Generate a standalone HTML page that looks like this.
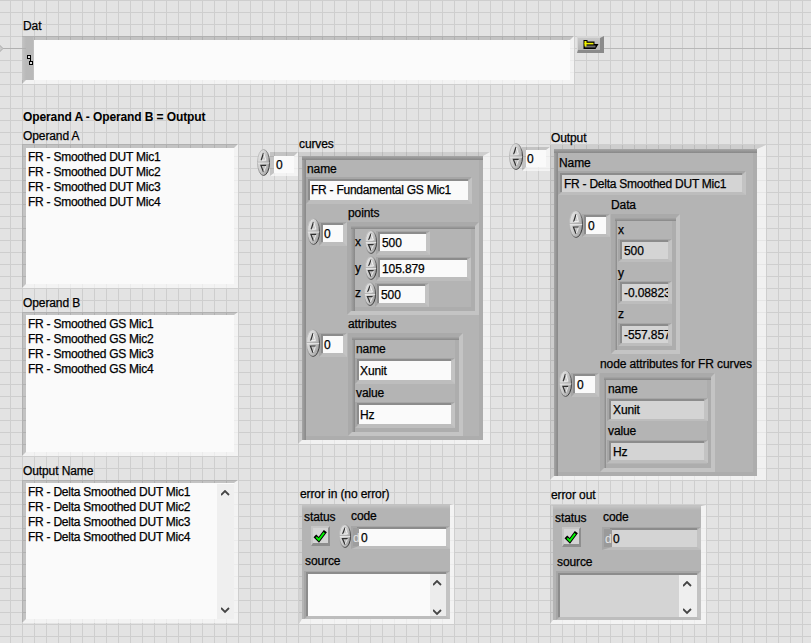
<!DOCTYPE html><html><head><meta charset="utf-8"><style>
*{margin:0;padding:0;box-sizing:content-box}
html,body{width:811px;height:643px;overflow:hidden}
body{position:relative;background-color:#e3e3e3;
background-image:linear-gradient(to right,#cecece 1px,transparent 1px),linear-gradient(to bottom,#cecece 1px,transparent 1px);
background-size:12px 12px;background-position:10px 0px;font-family:"Liberation Sans",sans-serif}
div{position:absolute}
svg{display:block}
.t{font-size:12px;line-height:15px;letter-spacing:-0.1px;color:#000;white-space:nowrap;-webkit-text-stroke:0.25px #000}
.b{font-weight:bold;letter-spacing:-0.1px;-webkit-text-stroke:0.05px #000}
.n{letter-spacing:-0.25px}
.rg{border-style:solid;border-color:rgba(0,0,0,.14) rgba(255,255,255,.6) rgba(255,255,255,.6) rgba(0,0,0,.14);background-clip:padding-box}
.rp{box-sizing:border-box;border-style:solid;border-color:#a6a6a6 #c3c3c3 #bdbdbd #a6a6a6}
.clo{border-style:solid;border-color:rgba(0,0,0,.09) rgba(255,255,255,.5) rgba(255,255,255,.5) rgba(0,0,0,.09)}
.cso{border-style:solid;border-color:#a9a9a9 #c3c3c3 #c3c3c3 #a9a9a9}
.cli{box-sizing:border-box;border-style:solid;border-width:4px 4px 4px 4px;border-color:#8e8e8e #ababab #ababab #8e8e8e;background:#b4b4b4;box-shadow:inset 0 0 0 0 transparent}
</style></head><body>
<div class="t" style="left:23px;top:19px;">Dat</div>
<div style="left:0;top:43px"><svg width="5" height="11"><path d="M-1 1.5 L3 5.5 L-1 9.5" fill="#cacaca" stroke="#a9a9a9" stroke-width="1"/></svg></div>
<div class="rg" style="left:22px;top:36px;width:544px;height:40px;border-width:4px 4px 4px 4px;background-color:#fbfbfb"></div>
<div style="left:22px;top:37px;width:12px;height:43px;background:linear-gradient(to right,#c4c4c4,#b9b9b9 4px,#b9b9b9 11px,#c8c8c8)"></div>
<div style="left:27px;top:55px;width:4px;height:4px;background:#000"></div>
<div style="left:28px;top:56px;width:2px;height:2px;background:#dcdcdc"></div>
<div style="left:30px;top:59px;width:1px;height:2px;background:#000"></div>
<div style="left:3px;top:48px;width:23px;height:1px;background:#b0b0b0"></div>
<div style="left:604px;top:48px;width:207px;height:1px;background:#b8b8b8"></div>
<div style="left:29px;top:61px;width:4px;height:4px;background:#000"></div>
<div style="left:30px;top:62px;width:2px;height:2px;background:#dcdcdc"></div>
<div style="left:577px;top:36px;width:22px;height:12px;border-style:solid;border-width:2px 4px 3px 1px;border-color:#d6d6d6 #8a8a8a #8a8a8a #d6d6d6;background:linear-gradient(#c8c8c8,#b4b4b4)"><svg width="27" height="17" style="position:absolute;left:-1px;top:-2px"><path d="M6.5 4 H10.5 V5.5 H17.5 V8 H21.5 L18.5 13 H6.5 Z" fill="#000"/><rect x="8" y="9.5" width="10.5" height="2" fill="#6e6e6e"/><rect x="7.5" y="5" width="2" height="5.5" fill="#f0f000"/><rect x="7.5" y="6.8" width="9" height="1.6" fill="#f0f000"/></svg></div>
<div class="t b" style="left:23px;top:110px;">Operand A - Operand B = Output</div>
<div class="t" style="left:23px;top:129px;">Operand A</div>
<div class="rg" style="left:22px;top:144px;width:208px;height:136px;border-width:4px 4px 4px 4px;background-color:#fafafa"></div>
<div class="t n" style="left:28px;top:150px;">FR - Smoothed DUT Mic1</div>
<div class="t n" style="left:28px;top:165px;">FR - Smoothed DUT Mic2</div>
<div class="t n" style="left:28px;top:180px;">FR - Smoothed DUT Mic3</div>
<div class="t n" style="left:28px;top:195px;">FR - Smoothed DUT Mic4</div>
<div class="t" style="left:23px;top:296px;">Operand B</div>
<div class="rg" style="left:22px;top:312px;width:208px;height:137px;border-width:3px 4px 4px 4px;background-color:#fafafa"></div>
<div class="t n" style="left:28px;top:317px;">FR - Smoothed GS Mic1</div>
<div class="t n" style="left:28px;top:332px;">FR - Smoothed GS Mic2</div>
<div class="t n" style="left:28px;top:347px;">FR - Smoothed GS Mic3</div>
<div class="t n" style="left:28px;top:362px;">FR - Smoothed GS Mic4</div>
<div class="t" style="left:23px;top:464px;">Output Name</div>
<div class="rg" style="left:22px;top:480px;width:208px;height:136px;border-width:3px 4px 4px 4px;background-color:#fafafa"></div>
<div style="left:217px;top:484px;width:17px;height:135px;background:#efefef"></div>
<div style="left:221px;top:490px;"><svg width="9" height="7"><path d="M0 5 L4 1 L8 5" fill="none" stroke="#444" stroke-width="1.8"/></svg></div>
<div style="left:221px;top:607px;"><svg width="9" height="7"><path d="M0 1 L4 5 L8 1" fill="none" stroke="#444" stroke-width="1.8"/></svg></div>
<div class="t n" style="left:28px;top:485px;">FR - Delta Smoothed DUT Mic1</div>
<div class="t n" style="left:28px;top:500px;">FR - Delta Smoothed DUT Mic2</div>
<div class="t n" style="left:28px;top:515px;">FR - Delta Smoothed DUT Mic3</div>
<div class="t n" style="left:28px;top:530px;">FR - Delta Smoothed DUT Mic4</div>
<div class="t" style="left:299px;top:137px;">curves</div>
<div style="left:257px;top:149px;width:13px;height:27px"><svg width="13" height="27" viewBox="0 0 13 27"><defs><linearGradient id="sf" x1="0" y1="0" x2="1" y2="0.6"><stop offset="0" stop-color="#ececec"/><stop offset="0.5" stop-color="#cfcfcf"/><stop offset="1" stop-color="#a6a6a6"/></linearGradient><linearGradient id="ss" x1="0" y1="0" x2="1" y2="0.7"><stop offset="0" stop-color="#d0d0d0"/><stop offset="0.45" stop-color="#a0a0a0"/><stop offset="1" stop-color="#303030"/></linearGradient></defs><ellipse cx="6.5" cy="13.5" rx="6.0" ry="13.0" fill="url(#sf)" stroke="url(#ss)" stroke-width="1"/><line x1="0.8" y1="13.2" x2="12.2" y2="13.2" stroke="#a4a4a4" stroke-width="0.8"/><line x1="0.8" y1="14.1" x2="12.2" y2="14.1" stroke="#e6e6e6" stroke-width="1"/><path d="M4.2 11.2 L6.5 4.0" stroke="#303030" stroke-width="1.2" fill="none"/><path d="M6.8 4.5 L8.9 11.2 L4.7 11.2" stroke="#f6f6f6" stroke-width="0.9" fill="none"/><path d="M9.1 16.4 L3.9 16.4 L6.5 23.0" stroke="#303030" stroke-width="1.2" fill="none"/><path d="M6.8 22.5 L8.9 17.0" stroke="#f2f2f2" stroke-width="0.9" fill="none"/></svg></div>
<div class="rg" style="left:270px;top:152px;width:20px;height:17px;border-width:4px 4px 3px 4px;background-color:#fafafa"></div>
<div class="t" style="left:276px;top:158px;">0</div>
<div style="box-sizing:border-box;left:298px;top:152px;width:192px;height:292px;border-style:solid;border-width:4px 7px 4px 4px;border-color:rgba(0,0,0,.09) rgba(255,255,255,.5) rgba(255,255,255,.5) rgba(0,0,0,.09)"></div>
<div style="left:302px;top:156px;width:181px;height:284px;background:linear-gradient(to bottom,#a6a6a6,#888888) left top/100% 4px no-repeat,linear-gradient(to right,#a6a6a6,#888888) left top/4px 100% no-repeat,linear-gradient(#adadad,#adadad) right top/4px 100% no-repeat,linear-gradient(#adadad,#adadad) left bottom/100% 4px no-repeat,#b4b4b4"></div>
<div class="t" style="left:307px;top:162px;">name</div>
<div class="rp" style="left:306px;top:177px;width:166px;height:27px;border-width:4px 4px 4px 4px;"></div>
<div style="left:308px;top:179px;width:160px;height:21px;border-top:2px solid #8c8c8c;border-left:2px solid #8c8c8c;box-sizing:border-box"></div>
<div style="left:310px;top:181px;width:158px;height:19px;background:#fafafa"></div>
<div class="t n" style="left:311px;top:183px;">FR - Fundamental GS Mic1</div>
<div class="t" style="left:348px;top:206px;">points</div>
<div class="rp" style="left:319px;top:222px;width:28px;height:24px;border-width:3px 4px 4px 4px;"></div>
<div style="left:321px;top:223px;width:22px;height:19px;border-top:2px solid #8c8c8c;border-left:2px solid #8c8c8c;box-sizing:border-box"></div>
<div style="left:323px;top:225px;width:20px;height:17px;background:#fafafa"></div>
<div style="left:307px;top:218px;width:13px;height:27px"><svg width="13" height="27" viewBox="0 0 13 27"><defs><linearGradient id="sf" x1="0" y1="0" x2="1" y2="0.6"><stop offset="0" stop-color="#ececec"/><stop offset="0.5" stop-color="#cfcfcf"/><stop offset="1" stop-color="#a6a6a6"/></linearGradient><linearGradient id="ss" x1="0" y1="0" x2="1" y2="0.7"><stop offset="0" stop-color="#d0d0d0"/><stop offset="0.45" stop-color="#a0a0a0"/><stop offset="1" stop-color="#303030"/></linearGradient></defs><ellipse cx="6.5" cy="13.5" rx="6.0" ry="13.0" fill="url(#sf)" stroke="url(#ss)" stroke-width="1"/><line x1="0.8" y1="13.2" x2="12.2" y2="13.2" stroke="#a4a4a4" stroke-width="0.8"/><line x1="0.8" y1="14.1" x2="12.2" y2="14.1" stroke="#e6e6e6" stroke-width="1"/><path d="M4.2 11.2 L6.5 4.0" stroke="#303030" stroke-width="1.2" fill="none"/><path d="M6.8 4.5 L8.9 11.2 L4.7 11.2" stroke="#f6f6f6" stroke-width="0.9" fill="none"/><path d="M9.1 16.4 L3.9 16.4 L6.5 23.0" stroke="#303030" stroke-width="1.2" fill="none"/><path d="M6.8 22.5 L8.9 17.0" stroke="#f2f2f2" stroke-width="0.9" fill="none"/></svg></div>
<div class="t" style="left:324px;top:227px;">0</div>
<div style="box-sizing:border-box;left:347px;top:222px;width:132px;height:93px;border-style:solid;border-width:4px 4px 4px 4px;border-color:rgba(0,0,0,.05) rgba(255,255,255,.22) rgba(255,255,255,.22) rgba(0,0,0,.05)"></div>
<div style="left:351px;top:226px;width:124px;height:85px;background:linear-gradient(to bottom,#a6a6a6,#888888) left top/100% 3px no-repeat,linear-gradient(to right,#a6a6a6,#888888) left top/4px 100% no-repeat,linear-gradient(#adadad,#adadad) right top/4px 100% no-repeat,linear-gradient(#adadad,#adadad) left bottom/100% 4px no-repeat,#b4b4b4"></div>
<div class="t" style="left:355px;top:235px;">x</div>
<div class="rp" style="left:376px;top:231px;width:54px;height:24px;border-width:3px 4px 4px 4px;"></div>
<div style="left:378px;top:232px;width:48px;height:19px;border-top:2px solid #8c8c8c;border-left:2px solid #8c8c8c;box-sizing:border-box"></div>
<div style="left:380px;top:234px;width:46px;height:17px;background:#fafafa"></div>
<div style="left:365px;top:230px;width:12px;height:24px"><svg width="12" height="24" viewBox="0 0 12 24"><defs><linearGradient id="sf" x1="0" y1="0" x2="1" y2="0.6"><stop offset="0" stop-color="#ececec"/><stop offset="0.5" stop-color="#cfcfcf"/><stop offset="1" stop-color="#a6a6a6"/></linearGradient><linearGradient id="ss" x1="0" y1="0" x2="1" y2="0.7"><stop offset="0" stop-color="#d0d0d0"/><stop offset="0.45" stop-color="#a0a0a0"/><stop offset="1" stop-color="#303030"/></linearGradient></defs><ellipse cx="6.0" cy="12.0" rx="5.5" ry="11.5" fill="url(#sf)" stroke="url(#ss)" stroke-width="1"/><line x1="0.8" y1="11.7" x2="11.2" y2="11.7" stroke="#a4a4a4" stroke-width="0.8"/><line x1="0.8" y1="12.6" x2="11.2" y2="12.6" stroke="#e6e6e6" stroke-width="1"/><path d="M3.7 10.0 L6.0 3.6" stroke="#303030" stroke-width="1.2" fill="none"/><path d="M6.3 4.1 L8.4 10.0 L4.2 10.0" stroke="#f6f6f6" stroke-width="0.9" fill="none"/><path d="M8.6 14.6 L3.4 14.6 L6.0 20.4" stroke="#303030" stroke-width="1.2" fill="none"/><path d="M6.3 19.9 L8.4 15.2" stroke="#f2f2f2" stroke-width="0.9" fill="none"/></svg></div>
<div class="t" style="left:382px;top:236px;">500</div>
<div class="t" style="left:355px;top:261px;">y</div>
<div class="rp" style="left:376px;top:257px;width:95px;height:24px;border-width:3px 4px 4px 4px;"></div>
<div style="left:378px;top:258px;width:89px;height:19px;border-top:2px solid #8c8c8c;border-left:2px solid #8c8c8c;box-sizing:border-box"></div>
<div style="left:380px;top:260px;width:87px;height:17px;background:#fafafa"></div>
<div style="left:365px;top:256px;width:12px;height:24px"><svg width="12" height="24" viewBox="0 0 12 24"><defs><linearGradient id="sf" x1="0" y1="0" x2="1" y2="0.6"><stop offset="0" stop-color="#ececec"/><stop offset="0.5" stop-color="#cfcfcf"/><stop offset="1" stop-color="#a6a6a6"/></linearGradient><linearGradient id="ss" x1="0" y1="0" x2="1" y2="0.7"><stop offset="0" stop-color="#d0d0d0"/><stop offset="0.45" stop-color="#a0a0a0"/><stop offset="1" stop-color="#303030"/></linearGradient></defs><ellipse cx="6.0" cy="12.0" rx="5.5" ry="11.5" fill="url(#sf)" stroke="url(#ss)" stroke-width="1"/><line x1="0.8" y1="11.7" x2="11.2" y2="11.7" stroke="#a4a4a4" stroke-width="0.8"/><line x1="0.8" y1="12.6" x2="11.2" y2="12.6" stroke="#e6e6e6" stroke-width="1"/><path d="M3.7 10.0 L6.0 3.6" stroke="#303030" stroke-width="1.2" fill="none"/><path d="M6.3 4.1 L8.4 10.0 L4.2 10.0" stroke="#f6f6f6" stroke-width="0.9" fill="none"/><path d="M8.6 14.6 L3.4 14.6 L6.0 20.4" stroke="#303030" stroke-width="1.2" fill="none"/><path d="M6.3 19.9 L8.4 15.2" stroke="#f2f2f2" stroke-width="0.9" fill="none"/></svg></div>
<div class="t" style="left:382px;top:262px;">105.879</div>
<div class="t" style="left:355px;top:286px;">z</div>
<div class="rp" style="left:375px;top:283px;width:54px;height:24px;border-width:3px 4px 4px 4px;"></div>
<div style="left:377px;top:284px;width:48px;height:19px;border-top:2px solid #8c8c8c;border-left:2px solid #8c8c8c;box-sizing:border-box"></div>
<div style="left:379px;top:286px;width:46px;height:17px;background:#fafafa"></div>
<div style="left:364px;top:282px;width:12px;height:24px"><svg width="12" height="24" viewBox="0 0 12 24"><defs><linearGradient id="sf" x1="0" y1="0" x2="1" y2="0.6"><stop offset="0" stop-color="#ececec"/><stop offset="0.5" stop-color="#cfcfcf"/><stop offset="1" stop-color="#a6a6a6"/></linearGradient><linearGradient id="ss" x1="0" y1="0" x2="1" y2="0.7"><stop offset="0" stop-color="#d0d0d0"/><stop offset="0.45" stop-color="#a0a0a0"/><stop offset="1" stop-color="#303030"/></linearGradient></defs><ellipse cx="6.0" cy="12.0" rx="5.5" ry="11.5" fill="url(#sf)" stroke="url(#ss)" stroke-width="1"/><line x1="0.8" y1="11.7" x2="11.2" y2="11.7" stroke="#a4a4a4" stroke-width="0.8"/><line x1="0.8" y1="12.6" x2="11.2" y2="12.6" stroke="#e6e6e6" stroke-width="1"/><path d="M3.7 10.0 L6.0 3.6" stroke="#303030" stroke-width="1.2" fill="none"/><path d="M6.3 4.1 L8.4 10.0 L4.2 10.0" stroke="#f6f6f6" stroke-width="0.9" fill="none"/><path d="M8.6 14.6 L3.4 14.6 L6.0 20.4" stroke="#303030" stroke-width="1.2" fill="none"/><path d="M6.3 19.9 L8.4 15.2" stroke="#f2f2f2" stroke-width="0.9" fill="none"/></svg></div>
<div class="t" style="left:381px;top:288px;">500</div>
<div class="t" style="left:348px;top:317px;">attributes</div>
<div class="rp" style="left:319px;top:333px;width:28px;height:24px;border-width:3px 4px 4px 4px;"></div>
<div style="left:321px;top:334px;width:22px;height:19px;border-top:2px solid #8c8c8c;border-left:2px solid #8c8c8c;box-sizing:border-box"></div>
<div style="left:323px;top:336px;width:20px;height:17px;background:#fafafa"></div>
<div style="left:306px;top:329px;width:14px;height:28px"><svg width="14" height="28" viewBox="0 0 14 28"><defs><linearGradient id="sf" x1="0" y1="0" x2="1" y2="0.6"><stop offset="0" stop-color="#ececec"/><stop offset="0.5" stop-color="#cfcfcf"/><stop offset="1" stop-color="#a6a6a6"/></linearGradient><linearGradient id="ss" x1="0" y1="0" x2="1" y2="0.7"><stop offset="0" stop-color="#d0d0d0"/><stop offset="0.45" stop-color="#a0a0a0"/><stop offset="1" stop-color="#303030"/></linearGradient></defs><ellipse cx="7.0" cy="14.0" rx="6.5" ry="13.5" fill="url(#sf)" stroke="url(#ss)" stroke-width="1"/><line x1="0.8" y1="13.7" x2="13.2" y2="13.7" stroke="#a4a4a4" stroke-width="0.8"/><line x1="0.8" y1="14.6" x2="13.2" y2="14.6" stroke="#e6e6e6" stroke-width="1"/><path d="M4.7 11.6 L7.0 4.1" stroke="#303030" stroke-width="1.2" fill="none"/><path d="M7.3 4.6 L9.4 11.6 L5.2 11.6" stroke="#f6f6f6" stroke-width="0.9" fill="none"/><path d="M9.6 17.0 L4.4 17.0 L7.0 23.9" stroke="#303030" stroke-width="1.2" fill="none"/><path d="M7.3 23.4 L9.4 17.6" stroke="#f2f2f2" stroke-width="0.9" fill="none"/></svg></div>
<div class="t" style="left:324px;top:338px;">0</div>
<div style="box-sizing:border-box;left:348px;top:333px;width:115px;height:103px;border-style:solid;border-width:4px 4px 4px 4px;border-color:rgba(0,0,0,.05) rgba(255,255,255,.22) rgba(255,255,255,.22) rgba(0,0,0,.05)"></div>
<div style="left:352px;top:337px;width:107px;height:95px;background:linear-gradient(to bottom,#a6a6a6,#888888) left top/100% 3px no-repeat,linear-gradient(to right,#a6a6a6,#888888) left top/3px 100% no-repeat,linear-gradient(#adadad,#adadad) right top/4px 100% no-repeat,linear-gradient(#adadad,#adadad) left bottom/100% 4px no-repeat,#b4b4b4"></div>
<div class="t" style="left:356px;top:342px;">name</div>
<div class="rp" style="left:355px;top:358px;width:100px;height:26px;border-width:3px 4px 4px 4px;"></div>
<div style="left:357px;top:359px;width:94px;height:21px;border-top:2px solid #8c8c8c;border-left:2px solid #8c8c8c;box-sizing:border-box"></div>
<div style="left:359px;top:361px;width:92px;height:19px;background:#fafafa"></div>
<div class="t" style="left:360px;top:364px;">Xunit</div>
<div class="t" style="left:356px;top:386px;">value</div>
<div class="rp" style="left:355px;top:402px;width:100px;height:26px;border-width:3px 4px 4px 4px;"></div>
<div style="left:357px;top:403px;width:94px;height:21px;border-top:2px solid #8c8c8c;border-left:2px solid #8c8c8c;box-sizing:border-box"></div>
<div style="left:359px;top:405px;width:92px;height:19px;background:#fafafa"></div>
<div class="t" style="left:360px;top:408px;">Hz</div>
<div class="t" style="left:551px;top:131px;">Output</div>
<div style="left:509px;top:143px;width:14px;height:27px"><svg width="14" height="27" viewBox="0 0 14 27"><defs><linearGradient id="sf" x1="0" y1="0" x2="1" y2="0.6"><stop offset="0" stop-color="#ececec"/><stop offset="0.5" stop-color="#cfcfcf"/><stop offset="1" stop-color="#a6a6a6"/></linearGradient><linearGradient id="ss" x1="0" y1="0" x2="1" y2="0.7"><stop offset="0" stop-color="#d0d0d0"/><stop offset="0.45" stop-color="#a0a0a0"/><stop offset="1" stop-color="#303030"/></linearGradient></defs><ellipse cx="7.0" cy="13.5" rx="6.5" ry="13.0" fill="url(#sf)" stroke="url(#ss)" stroke-width="1"/><line x1="0.8" y1="13.2" x2="13.2" y2="13.2" stroke="#a4a4a4" stroke-width="0.8"/><line x1="0.8" y1="14.1" x2="13.2" y2="14.1" stroke="#e6e6e6" stroke-width="1"/><path d="M4.7 11.2 L7.0 4.0" stroke="#303030" stroke-width="1.2" fill="none"/><path d="M7.3 4.5 L9.4 11.2 L5.2 11.2" stroke="#f6f6f6" stroke-width="0.9" fill="none"/><path d="M9.6 16.4 L4.4 16.4 L7.0 23.0" stroke="#303030" stroke-width="1.2" fill="none"/><path d="M7.3 22.5 L9.4 17.0" stroke="#f2f2f2" stroke-width="0.9" fill="none"/></svg></div>
<div class="rg" style="left:522px;top:147px;width:20px;height:17px;border-width:3px 4px 4px 4px;background-color:#fafafa"></div>
<div class="t" style="left:527px;top:152px;">0</div>
<div style="box-sizing:border-box;left:550px;top:145px;width:216px;height:335px;border-style:solid;border-width:4px 9px 4px 4px;border-color:rgba(0,0,0,.09) rgba(255,255,255,.5) rgba(255,255,255,.5) rgba(0,0,0,.09)"></div>
<div style="left:554px;top:149px;width:203px;height:327px;background:linear-gradient(to bottom,#a6a6a6,#888888) left top/100% 4px no-repeat,linear-gradient(to right,#a6a6a6,#888888) left top/4px 100% no-repeat,linear-gradient(#adadad,#adadad) right top/4px 100% no-repeat,linear-gradient(#adadad,#adadad) left bottom/100% 4px no-repeat,#b4b4b4"></div>
<div class="t" style="left:559px;top:156px;">Name</div>
<div class="rp" style="left:558px;top:171px;width:188px;height:24px;border-width:4px 4px 3px 4px;"></div>
<div style="left:560px;top:173px;width:182px;height:19px;border-top:2px solid #8c8c8c;border-left:2px solid #8c8c8c;box-sizing:border-box"></div>
<div style="left:562px;top:175px;width:180px;height:17px;background:#d4d4d4"></div>
<div class="t n" style="left:564px;top:177px;">FR - Delta Smoothed DUT Mic1</div>
<div class="t" style="left:611px;top:198px;">Data</div>
<div class="rp" style="left:582px;top:214px;width:28px;height:23px;border-width:3px 4px 3px 4px;"></div>
<div style="left:584px;top:215px;width:22px;height:19px;border-top:2px solid #8c8c8c;border-left:2px solid #8c8c8c;box-sizing:border-box"></div>
<div style="left:586px;top:217px;width:20px;height:17px;background:#fafafa"></div>
<div style="left:569px;top:210px;width:14px;height:28px"><svg width="14" height="28" viewBox="0 0 14 28"><defs><linearGradient id="sf" x1="0" y1="0" x2="1" y2="0.6"><stop offset="0" stop-color="#ececec"/><stop offset="0.5" stop-color="#cfcfcf"/><stop offset="1" stop-color="#a6a6a6"/></linearGradient><linearGradient id="ss" x1="0" y1="0" x2="1" y2="0.7"><stop offset="0" stop-color="#d0d0d0"/><stop offset="0.45" stop-color="#a0a0a0"/><stop offset="1" stop-color="#303030"/></linearGradient></defs><ellipse cx="7.0" cy="14.0" rx="6.5" ry="13.5" fill="url(#sf)" stroke="url(#ss)" stroke-width="1"/><line x1="0.8" y1="13.7" x2="13.2" y2="13.7" stroke="#a4a4a4" stroke-width="0.8"/><line x1="0.8" y1="14.6" x2="13.2" y2="14.6" stroke="#e6e6e6" stroke-width="1"/><path d="M4.7 11.6 L7.0 4.1" stroke="#303030" stroke-width="1.2" fill="none"/><path d="M7.3 4.6 L9.4 11.6 L5.2 11.6" stroke="#f6f6f6" stroke-width="0.9" fill="none"/><path d="M9.6 17.0 L4.4 17.0 L7.0 23.9" stroke="#303030" stroke-width="1.2" fill="none"/><path d="M7.3 23.4 L9.4 17.6" stroke="#f2f2f2" stroke-width="0.9" fill="none"/></svg></div>
<div class="t" style="left:588px;top:219px;">0</div>
<div style="box-sizing:border-box;left:611px;top:214px;width:69px;height:140px;border-style:solid;border-width:4px 4px 4px 4px;border-color:rgba(0,0,0,.05) rgba(255,255,255,.22) rgba(255,255,255,.22) rgba(0,0,0,.05)"></div>
<div style="left:615px;top:218px;width:61px;height:132px;background:linear-gradient(to bottom,#a6a6a6,#888888) left top/100% 3px no-repeat,linear-gradient(to right,#a6a6a6,#888888) left top/2px 100% no-repeat,linear-gradient(#adadad,#adadad) right top/4px 100% no-repeat,linear-gradient(#adadad,#adadad) left bottom/100% 4px no-repeat,#b4b4b4"></div>
<div class="t" style="left:618px;top:223px;">x</div>
<div class="rp" style="left:618px;top:239px;width:54px;height:23px;border-width:3px 4px 3px 4px;"></div>
<div style="left:620px;top:240px;width:48px;height:19px;border-top:2px solid #8c8c8c;border-left:2px solid #8c8c8c;box-sizing:border-box"></div>
<div style="left:622px;top:242px;width:46px;height:17px;background:#d4d4d4"></div>
<div class="t" style="left:624px;top:244px;">500</div>
<div class="t" style="left:618px;top:266px;">y</div>
<div class="rp" style="left:618px;top:281px;width:54px;height:23px;border-width:3px 4px 3px 4px;"></div>
<div style="left:620px;top:282px;width:48px;height:19px;border-top:2px solid #8c8c8c;border-left:2px solid #8c8c8c;box-sizing:border-box"></div>
<div style="left:622px;top:284px;width:46px;height:17px;background:#d4d4d4"></div>
<div style="left:622px;top:284px;width:46px;height:17px;overflow:hidden"><div class="t" style="left:2px;top:2px">-0.08823</div></div>
<div class="t" style="left:618px;top:307px;">z</div>
<div class="rp" style="left:618px;top:323px;width:54px;height:23px;border-width:3px 4px 3px 4px;"></div>
<div style="left:620px;top:324px;width:48px;height:19px;border-top:2px solid #8c8c8c;border-left:2px solid #8c8c8c;box-sizing:border-box"></div>
<div style="left:622px;top:326px;width:46px;height:17px;background:#d4d4d4"></div>
<div style="left:622px;top:326px;width:46px;height:17px;overflow:hidden"><div class="t" style="left:2px;top:2px">-557.857</div></div>
<div class="t" style="left:600px;top:357px;">node attributes for FR curves</div>
<div class="rp" style="left:571px;top:373px;width:28px;height:24px;border-width:3px 4px 4px 4px;"></div>
<div style="left:573px;top:374px;width:22px;height:19px;border-top:2px solid #8c8c8c;border-left:2px solid #8c8c8c;box-sizing:border-box"></div>
<div style="left:575px;top:376px;width:20px;height:17px;background:#fafafa"></div>
<div style="left:559px;top:370px;width:13px;height:27px"><svg width="13" height="27" viewBox="0 0 13 27"><defs><linearGradient id="sf" x1="0" y1="0" x2="1" y2="0.6"><stop offset="0" stop-color="#ececec"/><stop offset="0.5" stop-color="#cfcfcf"/><stop offset="1" stop-color="#a6a6a6"/></linearGradient><linearGradient id="ss" x1="0" y1="0" x2="1" y2="0.7"><stop offset="0" stop-color="#d0d0d0"/><stop offset="0.45" stop-color="#a0a0a0"/><stop offset="1" stop-color="#303030"/></linearGradient></defs><ellipse cx="6.5" cy="13.5" rx="6.0" ry="13.0" fill="url(#sf)" stroke="url(#ss)" stroke-width="1"/><line x1="0.8" y1="13.2" x2="12.2" y2="13.2" stroke="#a4a4a4" stroke-width="0.8"/><line x1="0.8" y1="14.1" x2="12.2" y2="14.1" stroke="#e6e6e6" stroke-width="1"/><path d="M4.2 11.2 L6.5 4.0" stroke="#303030" stroke-width="1.2" fill="none"/><path d="M6.8 4.5 L8.9 11.2 L4.7 11.2" stroke="#f6f6f6" stroke-width="0.9" fill="none"/><path d="M9.1 16.4 L3.9 16.4 L6.5 23.0" stroke="#303030" stroke-width="1.2" fill="none"/><path d="M6.8 22.5 L8.9 17.0" stroke="#f2f2f2" stroke-width="0.9" fill="none"/></svg></div>
<div class="t" style="left:577px;top:378px;">0</div>
<div style="box-sizing:border-box;left:600px;top:373px;width:115px;height:99px;border-style:solid;border-width:4px 4px 4px 4px;border-color:rgba(0,0,0,.05) rgba(255,255,255,.22) rgba(255,255,255,.22) rgba(0,0,0,.05)"></div>
<div style="left:604px;top:377px;width:107px;height:91px;background:linear-gradient(to bottom,#a6a6a6,#888888) left top/100% 3px no-repeat,linear-gradient(to right,#a6a6a6,#888888) left top/2px 100% no-repeat,linear-gradient(#adadad,#adadad) right top/4px 100% no-repeat,linear-gradient(#adadad,#adadad) left bottom/100% 4px no-repeat,#b4b4b4"></div>
<div class="t" style="left:608px;top:382px;">name</div>
<div class="rp" style="left:607px;top:398px;width:101px;height:23px;border-width:3px 4px 2px 4px;"></div>
<div style="left:609px;top:399px;width:95px;height:20px;border-top:2px solid #8c8c8c;border-left:2px solid #8c8c8c;box-sizing:border-box"></div>
<div style="left:611px;top:401px;width:93px;height:18px;background:#d4d4d4"></div>
<div class="t" style="left:613px;top:403px;">Xunit</div>
<div class="t" style="left:608px;top:424px;">value</div>
<div class="rp" style="left:607px;top:440px;width:101px;height:23px;border-width:3px 4px 3px 4px;"></div>
<div style="left:609px;top:441px;width:95px;height:19px;border-top:2px solid #8c8c8c;border-left:2px solid #8c8c8c;box-sizing:border-box"></div>
<div style="left:611px;top:443px;width:93px;height:17px;background:#d4d4d4"></div>
<div class="t" style="left:613px;top:445px;">Hz</div>
<div class="t" style="left:300px;top:487px;">error in (no error)</div>
<div style="left:299px;top:504px;width:148px;height:114px;border-style:solid;border-width:1px 4px 5px 3px;border-color:#c2c2c2 rgba(255,255,255,.6) rgba(255,255,255,.6) rgba(0,0,0,.07);background:linear-gradient(#c4c4c4,#b4b4b4 4px);background-clip:padding-box"></div>
<div class="t" style="left:304px;top:510px;">status</div>
<div class="t" style="left:351px;top:509px;">code</div>
<div style="left:311px;top:526px;width:15px;height:15px;border-style:solid;border-width:2px 2px 3px 2px;border-color:#c6c6c6 #8e8e8e #8e8e8e #c6c6c6;background:#d4d4d4"><svg width="19" height="19" style="position:absolute;left:-2px;top:-2px"><path d="M5.2 11.2 L7.8 13.8 L13.2 6.6" fill="none" stroke="#000" stroke-width="3.8" stroke-linejoin="miter" stroke-linecap="square"/><path d="M5.2 11.2 L7.8 13.8 L13.2 6.6" fill="none" stroke="#00f400" stroke-width="1.9" stroke-linecap="butt"/></svg></div>
<div class="rp" style="left:351px;top:526px;width:99px;height:23px;border-width:3px 4px 3px 8px;"></div>
<div style="left:357px;top:527px;width:89px;height:19px;border-top:2px solid #8c8c8c;border-left:2px solid #8c8c8c;box-sizing:border-box"></div>
<div style="left:359px;top:529px;width:87px;height:17px;background:#fafafa"></div>
<div style="left:353px;top:528px;width:6px;height:18px;background:#9e9e9e"></div>
<div class="t" style="left:353px;top:531px;color:#e4e4e4;-webkit-text-stroke:0">d</div>
<div style="left:339px;top:524px;width:12px;height:24px"><svg width="12" height="24" viewBox="0 0 12 24"><defs><linearGradient id="sf" x1="0" y1="0" x2="1" y2="0.6"><stop offset="0" stop-color="#ececec"/><stop offset="0.5" stop-color="#cfcfcf"/><stop offset="1" stop-color="#a6a6a6"/></linearGradient><linearGradient id="ss" x1="0" y1="0" x2="1" y2="0.7"><stop offset="0" stop-color="#d0d0d0"/><stop offset="0.45" stop-color="#a0a0a0"/><stop offset="1" stop-color="#303030"/></linearGradient></defs><ellipse cx="6.0" cy="12.0" rx="5.5" ry="11.5" fill="url(#sf)" stroke="url(#ss)" stroke-width="1"/><line x1="0.8" y1="11.7" x2="11.2" y2="11.7" stroke="#a4a4a4" stroke-width="0.8"/><line x1="0.8" y1="12.6" x2="11.2" y2="12.6" stroke="#e6e6e6" stroke-width="1"/><path d="M3.7 10.0 L6.0 3.6" stroke="#303030" stroke-width="1.2" fill="none"/><path d="M6.3 4.1 L8.4 10.0 L4.2 10.0" stroke="#f6f6f6" stroke-width="0.9" fill="none"/><path d="M8.6 14.6 L3.4 14.6 L6.0 20.4" stroke="#303030" stroke-width="1.2" fill="none"/><path d="M6.3 19.9 L8.4 15.2" stroke="#f2f2f2" stroke-width="0.9" fill="none"/></svg></div>
<div class="t" style="left:361px;top:531px;">0</div>
<div class="t" style="left:305px;top:554px;">source</div>
<div class="rp" style="left:304px;top:571px;width:146px;height:48px;border-width:3px 4px 3px 4px;"></div>
<div style="left:306px;top:572px;width:140px;height:44px;border-top:2px solid #8c8c8c;border-left:2px solid #8c8c8c;box-sizing:border-box"></div>
<div style="left:308px;top:574px;width:138px;height:42px;background:#fafafa"></div>
<div style="left:430px;top:574px;width:16px;height:42px;background:#ececec"></div>
<div style="left:433px;top:580px;"><svg width="9" height="7"><path d="M0 5 L4 1 L8 5" fill="none" stroke="#444" stroke-width="1.8"/></svg></div>
<div style="left:433px;top:609px;"><svg width="9" height="7"><path d="M0 1 L4 5 L8 1" fill="none" stroke="#444" stroke-width="1.8"/></svg></div>
<div class="t" style="left:551px;top:488px;">error out</div>
<div style="left:550px;top:505px;width:148px;height:114px;border-style:solid;border-width:1px 5px 4px 3px;border-color:#c2c2c2 rgba(255,255,255,.6) rgba(255,255,255,.6) rgba(0,0,0,.07);background:linear-gradient(#c4c4c4,#b4b4b4 4px);background-clip:padding-box"></div>
<div class="t" style="left:555px;top:511px;">status</div>
<div class="t" style="left:603px;top:510px;">code</div>
<div style="left:562px;top:527px;width:15px;height:15px;border-style:solid;border-width:2px 2px 3px 2px;border-color:#c6c6c6 #8e8e8e #8e8e8e #c6c6c6;background:#d4d4d4"><svg width="19" height="19" style="position:absolute;left:-2px;top:-2px"><path d="M5.2 11.2 L7.8 13.8 L13.2 6.6" fill="none" stroke="#000" stroke-width="3.8" stroke-linejoin="miter" stroke-linecap="square"/><path d="M5.2 11.2 L7.8 13.8 L13.2 6.6" fill="none" stroke="#00f400" stroke-width="1.9" stroke-linecap="butt"/></svg></div>
<div class="rp" style="left:602px;top:527px;width:99px;height:23px;border-width:3px 4px 3px 10px;"></div>
<div style="left:610px;top:528px;width:87px;height:19px;border-top:2px solid #8c8c8c;border-left:2px solid #8c8c8c;box-sizing:border-box"></div>
<div style="left:612px;top:530px;width:85px;height:17px;background:#d4d4d4"></div>
<div style="left:604px;top:529px;width:8px;height:18px;background:#9a9a9a"></div>
<div class="t" style="left:605px;top:532px;color:#e4e4e4;-webkit-text-stroke:0">d</div>
<div class="t" style="left:613px;top:532px;">0</div>
<div class="t" style="left:557px;top:555px;">source</div>
<div class="rp" style="left:556px;top:571px;width:145px;height:49px;border-width:4px 4px 3px 4px;"></div>
<div style="left:558px;top:573px;width:139px;height:44px;border-top:2px solid #8c8c8c;border-left:2px solid #8c8c8c;box-sizing:border-box"></div>
<div style="left:560px;top:575px;width:137px;height:42px;background:#d4d4d4"></div>
<div style="left:679px;top:575px;width:18px;height:42px;background:#efefef"></div>
<div style="left:683px;top:581px;"><svg width="9" height="7"><path d="M0 5 L4 1 L8 5" fill="none" stroke="#444" stroke-width="1.8"/></svg></div>
<div style="left:683px;top:608px;"><svg width="9" height="7"><path d="M0 1 L4 5 L8 1" fill="none" stroke="#444" stroke-width="1.8"/></svg></div>
</body></html>
